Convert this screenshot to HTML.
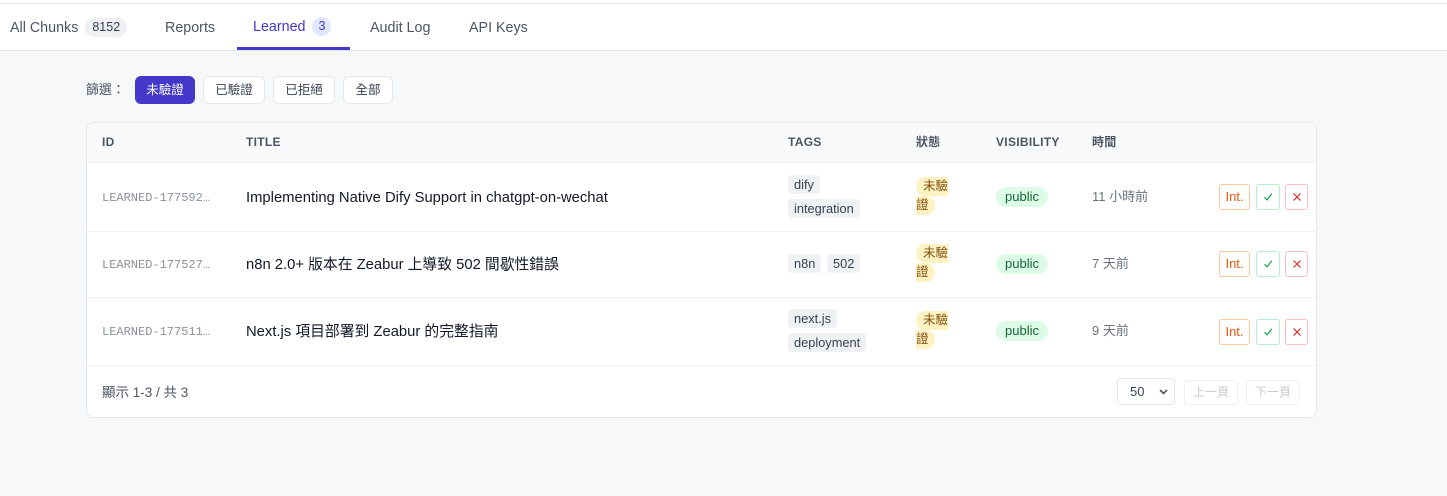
<!DOCTYPE html>
<html><head><meta charset="utf-8"><style>
*{margin:0;padding:0;box-sizing:border-box}
body{width:1447px;height:496px;background:#f7f8fa;font-family:"Liberation Sans","Noto Sans CJK TC",sans-serif;position:relative;overflow:hidden;color:#111827;line-height:18px}
.a{position:absolute;white-space:nowrap}
.top{position:absolute;left:0;top:0;width:1447px;height:51px;background:#fff}
.tab{position:absolute;top:18px;font-size:14.3px;color:#4b5563;line-height:20px}
.cnt{display:inline-block;background:#eef0f3;color:#374151;font-size:12.5px;border-radius:10px;padding:0 7px;height:19px;line-height:19px;margin-left:7px;vertical-align:top;margin-top:0px}
.fb{position:absolute;top:76px;height:28px;border:1px solid #e5e7eb;border-radius:6px;background:#fff;font-size:12.5px;line-height:26px;text-align:center;color:#374151}
.card{position:absolute;left:86px;top:122px;width:1231px;height:296px;background:#fff;border:1px solid #e5e7eb;border-radius:8px;overflow:hidden}
.hd{position:absolute;left:0;top:0;width:100%;height:40px;background:#f9fafb;border-bottom:1px solid #eef0f2}
.th{position:absolute;top:11px;font-size:12px;font-weight:bold;color:#4b5563;letter-spacing:.3px;line-height:16px}
.line{position:absolute;left:0;width:100%;height:1px;background:#eef0f2}
.id{font-family:"Liberation Mono",monospace;font-size:12px;color:#8a909b}
.tt{font-size:14.8px;color:#111827}
.tag{position:absolute;height:19px;line-height:19px;background:#f0f1f4;color:#374151;font-size:12.8px;padding:0 6px;border-radius:4px}
.st{position:absolute;background:#fdf3c2;color:#854d0e;font-size:12.5px;height:19px;line-height:19px}
.pub{position:absolute;height:20px;line-height:20px;background:#dcfce7;color:#166534;font-size:13px;padding:0 9px;border-radius:10px}
.tm{font-size:13px;color:#6b7280}
.b{position:absolute;height:26px;border-radius:3px;background:#fff;font-size:13px;line-height:24px;text-align:center}
.b svg{position:absolute;left:50%;top:50%;transform:translate(-50%,-50%)}
.bi{width:31px;border:1px solid #fdc99a;color:#ea580c}
.bc{width:24px;border:1px solid #b5efc7}
.bx{width:23px;border:1px solid #fbc0c0}
</style></head><body>
<div class="top"></div>
<div class="a" style="left:0;top:3px;width:1447px;height:1px;background:#e5e7eb"></div>
<div class="a" style="left:0;top:50px;width:1447px;height:1px;background:#e2e4e8"></div>
<div class="tab" style="left:10px">All Chunks<span class="cnt">8152</span></div>
<div class="tab" style="left:165px">Reports</div>
<div class="tab" style="left:253px;color:#4338ca;top:17px">Learned<span class="cnt" style="background:#e0e7ff;color:#4338ca;padding:0 6px">3</span></div>
<div class="a" style="left:237px;top:47px;width:113px;height:3px;background:#4338ca"></div>
<div class="tab" style="left:370px">Audit Log</div>
<div class="tab" style="left:469px">API Keys</div>

<div class="a" style="left:86px;top:81px;font-size:13px;color:#4b5563">篩選：</div>
<div class="fb" style="left:135px;width:60px;background:#4338ca;border-color:#4338ca;color:#fff">未驗證</div>
<div class="fb" style="left:203px;width:62px">已驗證</div>
<div class="fb" style="left:273px;width:62px">已拒絕</div>
<div class="fb" style="left:343px;width:50px">全部</div>

<div class="card">
<div class="hd"></div>
<div class="th" style="left:15px">ID</div>
<div class="th" style="left:159px">TITLE</div>
<div class="th" style="left:701px">TAGS</div>
<div class="th" style="left:829px">狀態</div>
<div class="th" style="left:909px">VISIBILITY</div>
<div class="th" style="left:1005px">時間</div>
<div class="line" style="top:108px"></div>
<div class="line" style="top:174px"></div>
<div class="line" style="top:242px"></div>

<!-- row1 -->
<div class="a id" style="left:15px;top:66px">LEARNED-177592…</div>
<div class="a tt" style="left:159px;top:66px">Implementing Native Dify Support in chatgpt-on-wechat</div>
<div class="tag" style="left:701px;top:52px">dify</div>
<div class="tag" style="left:701px;top:76px">integration</div>
<div class="st" style="left:829px;top:54px;width:32px;padding-left:7px;border-radius:10px 0 0 10px">未驗</div>
<div class="st" style="left:829px;top:73px;width:19px;border-radius:0 10px 10px 0">證</div>
<div class="pub" style="left:909px;top:64px">public</div>
<div class="a tm" style="left:1005px;top:65px">11 小時前</div>
<div class="b bi" style="left:1132px;top:61px">Int.</div>
<div class="b bc" style="left:1169px;top:61px"><svg width="10" height="10" viewBox="0 0 10 10"><path d="M1.5 5.2L4 7.8L8.8 1.8" fill="none" stroke="#16a34a" stroke-width="1.2"/></svg></div>
<div class="b bx" style="left:1198px;top:61px"><svg width="9" height="9" viewBox="0 0 9 9"><path d="M1 1L8 8M8 1L1 8" stroke="#dc2626" stroke-width="1.2"/></svg></div>

<!-- row2 -->
<div class="a id" style="left:15px;top:133px">LEARNED-177527…</div>
<div class="a tt" style="left:159px;top:133px">n8n 2.0+ 版本在 Zeabur 上導致 502 間歇性錯誤</div>
<div class="tag" style="left:701px;top:131px">n8n</div>
<div class="tag" style="left:740px;top:131px">502</div>
<div class="st" style="left:829px;top:121px;width:32px;padding-left:7px;border-radius:10px 0 0 10px">未驗</div>
<div class="st" style="left:829px;top:140px;width:19px;border-radius:0 10px 10px 0">證</div>
<div class="pub" style="left:909px;top:131px">public</div>
<div class="a tm" style="left:1005px;top:132px">7 天前</div>
<div class="b bi" style="left:1132px;top:128px">Int.</div>
<div class="b bc" style="left:1169px;top:128px"><svg width="10" height="10" viewBox="0 0 10 10"><path d="M1.5 5.2L4 7.8L8.8 1.8" fill="none" stroke="#16a34a" stroke-width="1.2"/></svg></div>
<div class="b bx" style="left:1198px;top:128px"><svg width="9" height="9" viewBox="0 0 9 9"><path d="M1 1L8 8M8 1L1 8" stroke="#dc2626" stroke-width="1.2"/></svg></div>

<!-- row3 -->
<div class="a id" style="left:15px;top:200px">LEARNED-177511…</div>
<div class="a tt" style="left:159px;top:200px">Next.js 項目部署到 Zeabur 的完整指南</div>
<div class="tag" style="left:701px;top:186px">next.js</div>
<div class="tag" style="left:701px;top:210px">deployment</div>
<div class="st" style="left:829px;top:188px;width:32px;padding-left:7px;border-radius:10px 0 0 10px">未驗</div>
<div class="st" style="left:829px;top:207px;width:19px;border-radius:0 10px 10px 0">證</div>
<div class="pub" style="left:909px;top:198px">public</div>
<div class="a tm" style="left:1005px;top:199px">9 天前</div>
<div class="b bi" style="left:1132px;top:196px">Int.</div>
<div class="b bc" style="left:1169px;top:196px"><svg width="10" height="10" viewBox="0 0 10 10"><path d="M1.5 5.2L4 7.8L8.8 1.8" fill="none" stroke="#16a34a" stroke-width="1.2"/></svg></div>
<div class="b bx" style="left:1198px;top:196px"><svg width="9" height="9" viewBox="0 0 9 9"><path d="M1 1L8 8M8 1L1 8" stroke="#dc2626" stroke-width="1.2"/></svg></div>

<div class="a" style="left:15px;top:261px;font-size:13.5px;color:#4b5563">顯示 1-3 / 共 3</div>
<div class="a" style="left:1030px;top:255px;width:58px;height:27px;border:1px solid #e5e7eb;border-radius:4px;font-size:13px;line-height:25px;padding-left:12px;color:#374151">50<svg style="position:absolute;left:41px;top:10px" width="9" height="6" viewBox="0 0 9 6"><path d="M1 1L4.5 4.5L8 1" fill="none" stroke="#4b5563" stroke-width="1.6"/></svg></div>
<div class="a" style="left:1097px;top:257px;width:54px;height:25px;border:1px solid #eef0f2;border-radius:4px;font-size:12px;line-height:23px;text-align:center;color:#c8ccd2">上一頁</div>
<div class="a" style="left:1159px;top:257px;width:54px;height:25px;border:1px solid #eef0f2;border-radius:4px;font-size:12px;line-height:23px;text-align:center;color:#c8ccd2">下一頁</div>
</div>
</body></html>
